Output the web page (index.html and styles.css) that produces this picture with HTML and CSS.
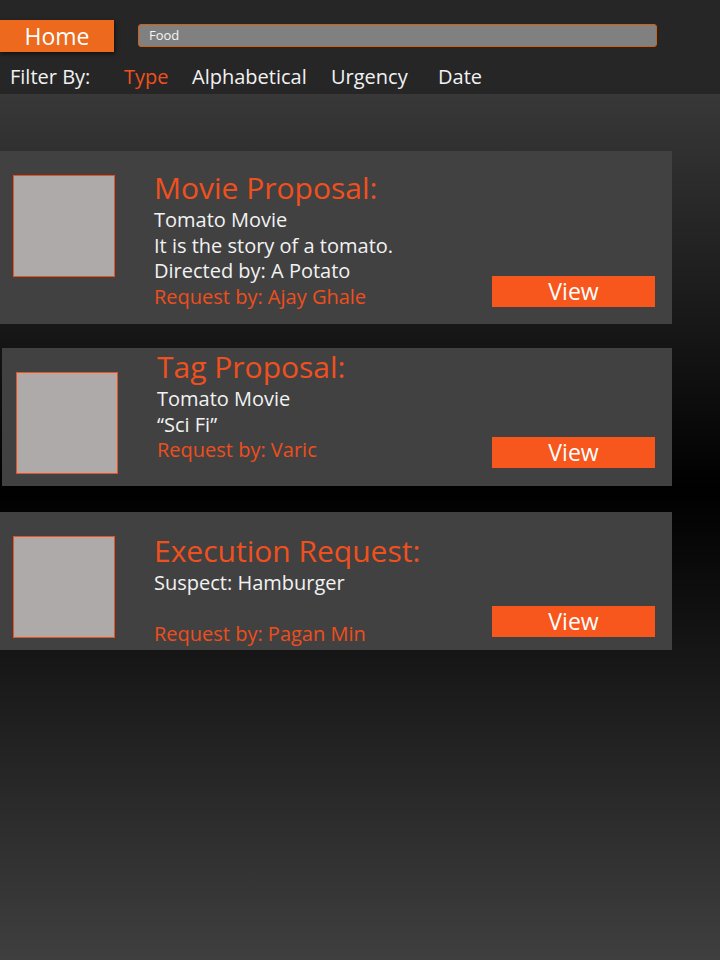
FILE: index.html
```html
<!DOCTYPE html>
<html>
<head>
<meta charset="utf-8">
<link rel="stylesheet" href="styles.css">
</head>
<body>
<header class="topbar">
  <div class="toprow">
    <div class="home-btn">Home</div>
    <div class="search">Food</div>
  </div>
  <nav class="filters">
    <span class="filter-label">Filter By:</span>
    <span class="filter active">Type</span>
    <span class="filter">Alphabetical</span>
    <span class="filter">Urgency</span>
    <span class="filter">Date</span>
  </nav>
</header>
<main class="list">
  <section class="card card-movie">
    <div class="thumb"></div>
    <div class="info">
      <div class="title">Movie Proposal:</div>
      <div class="line">Tomato Movie</div>
      <div class="line">It is the story of a tomato.</div>
      <div class="line">Directed by: A Potato</div>
      <div class="line req">Request by: Ajay Ghale</div>
    </div>
    <div class="view">View</div>
  </section>
  <section class="card card-tag">
    <div class="thumb"></div>
    <div class="info">
      <div class="title">Tag Proposal:</div>
      <div class="line">Tomato Movie</div>
      <div class="line">“Sci Fi”</div>
      <div class="line req">Request by: Varic</div>
    </div>
    <div class="view">View</div>
  </section>
  <section class="card card-exec">
    <div class="thumb"></div>
    <div class="info">
      <div class="title">Execution Request:</div>
      <div class="line">Suspect: Hamburger</div>
      <div class="line">&nbsp;</div>
      <div class="line req">Request by: Pagan Min</div>
    </div>
    <div class="view">View</div>
  </section>
</main>
</body>
</html>
```
FILE: styles.css
```css
html, body {
  margin: 0;
  padding: 0;
}
body {
  width: 720px;
  min-height: 960px;
  font-family: "Open Sans", "Noto Sans", sans-serif;
  color: #f2f2f2;
  background: linear-gradient(to bottom, #262626 0px, #262626 94px, #383838 94px, #000000 490px, #3f3f3f 960px);
  background-repeat: no-repeat;
  background-size: 720px 960px;
}
.topbar {
  height: 94px;
  background: #262626;
}
.toprow {
  display: flex;
  align-items: flex-start;
  padding-top: 20px;
}
.home-btn {
  width: 114px;
  height: 32px;
  background: #ec691e;
  color: #ffffff;
  font-size: 23px;
  line-height: 32px;
  text-align: center;
  box-shadow: 1px 2px 4px rgba(0, 0, 0, 0.55);
}
.search {
  margin-left: 24px;
  margin-top: 4px;
  width: 507px;
  height: 21px;
  background: #808080;
  border: 1px solid #d2600f;
  border-radius: 3px;
  color: #f5f5f5;
  font-size: 13px;
  line-height: 21px;
  padding-left: 10px;
}
.filters {
  display: grid;
  grid-template-columns: 114px 68px 139px 107px auto;
  padding-left: 10px;
  margin-top: 12px;
  font-size: 20px;
  line-height: 26px;
}
.filter-label, .filter {
  color: #f2f2f2;
  white-space: nowrap;
}
.filter.active {
  color: #f0501e;
}
.list {
  display: flex;
  flex-direction: column;
  padding-top: 57px;
}
.card {
  display: flex;
  width: 672px;
  background: #414141;
  box-sizing: border-box;
}
.card-movie {
  height: 173px;
}
.card-tag {
  height: 138px;
  width: 670px;
  margin-left: 2px;
  margin-top: 24px;
}
.card-exec {
  height: 138px;
  margin-top: 26px;
}
.thumb {
  flex: none;
  width: 100px;
  height: 100px;
  margin-top: 24px;
  margin-left: 13px;
  background: #aeaaa9;
  border: 1px solid #f0501e;
}
.card-tag .thumb {
  margin-left: 14px;
}
.info {
  flex: 1;
  margin-left: 39px;
}
.card-movie .info {
  padding-top: 18px;
}
.card-tag .info {
  padding-top: 0;
}
.card-exec .info {
  padding-top: 20px;
}
.title {
  font-size: 30px;
  line-height: 38px;
  color: #f0501e;
  white-space: nowrap;
}
.line {
  font-size: 20px;
  line-height: 25.5px;
  color: #f2f2f2;
  white-space: nowrap;
}
.line.req {
  color: #ee4e1c;
}
.view {
  flex: none;
  align-self: flex-end;
  width: 163px;
  height: 31px;
  margin-right: 17px;
  background: #f7561c;
  color: #ffffff;
  font-size: 23px;
  line-height: 31px;
  text-align: center;
}
.card-movie .view {
  margin-bottom: 17px;
}
.card-tag .view {
  margin-bottom: 18px;
  margin-right: 17px;
}
.card-exec .view {
  margin-bottom: 13px;
}
```
